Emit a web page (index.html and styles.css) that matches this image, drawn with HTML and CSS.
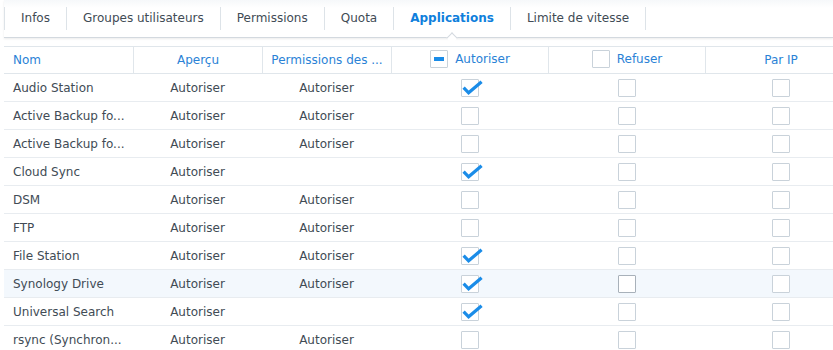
FILE: index.html
```html
<!DOCTYPE html>
<html lang="fr">
<head>
    <meta charset="UTF-8">
    <meta name="viewport" content="width=device-width, initial-scale=1.0">
    <title>Applications</title>
    <link rel="stylesheet" href="styles.css">
</head>
<body>
    <div class="tabs">
        <div class="tab">Infos</div>
        <div class="tab">Groupes utilisateurs</div>
        <div class="tab">Permissions</div>
        <div class="tab">Quota</div>
        <div class="tab active">Applications</div>
        <div class="tab last">Limite de vitesse</div>
    </div>

    <div class="grid-wrap">
        <table class="grid">
            <colgroup>
                <col class="c-small"><col class="c-small"><col class="c-small">
                <col class="c-wide"><col class="c-wide"><col class="c-last">
            </colgroup>
            <thead>
                <tr>
                    <th class="left">Nom</th>
                    <th>Aperçu</th>
                    <th>Permissions des ...</th>
                    <th><span class="head-cb"><span class="cb mixed"></span>Autoriser</span></th>
                    <th><span class="head-cb"><span class="cb"></span>Refuser</span></th>
                    <th>Par IP</th>
                </tr>
            </thead>
            <tbody>
                <tr>
                    <td class="left">Audio Station</td>
                    <td>Autoriser</td><td>Autoriser</td>
                    <td><span class="cb checked"></span></td>
                    <td><span class="cb"></span></td>
                    <td><span class="cb"></span></td>
                </tr>
                <tr>
                    <td class="left">Active Backup fo...</td>
                    <td>Autoriser</td><td>Autoriser</td>
                    <td><span class="cb"></span></td>
                    <td><span class="cb"></span></td>
                    <td><span class="cb"></span></td>
                </tr>
                <tr>
                    <td class="left">Active Backup fo...</td>
                    <td>Autoriser</td><td>Autoriser</td>
                    <td><span class="cb"></span></td>
                    <td><span class="cb"></span></td>
                    <td><span class="cb"></span></td>
                </tr>
                <tr>
                    <td class="left">Cloud Sync</td>
                    <td>Autoriser</td><td></td>
                    <td><span class="cb checked"></span></td>
                    <td><span class="cb"></span></td>
                    <td><span class="cb"></span></td>
                </tr>
                <tr>
                    <td class="left">DSM</td>
                    <td>Autoriser</td><td>Autoriser</td>
                    <td><span class="cb"></span></td>
                    <td><span class="cb"></span></td>
                    <td><span class="cb"></span></td>
                </tr>
                <tr>
                    <td class="left">FTP</td>
                    <td>Autoriser</td><td>Autoriser</td>
                    <td><span class="cb"></span></td>
                    <td><span class="cb"></span></td>
                    <td><span class="cb"></span></td>
                </tr>
                <tr>
                    <td class="left">File Station</td>
                    <td>Autoriser</td><td>Autoriser</td>
                    <td><span class="cb checked"></span></td>
                    <td><span class="cb"></span></td>
                    <td><span class="cb"></span></td>
                </tr>
                <tr class="hover">
                    <td class="left">Synology Drive</td>
                    <td>Autoriser</td><td>Autoriser</td>
                    <td><span class="cb checked"></span></td>
                    <td><span class="cb focus"></span></td>
                    <td><span class="cb"></span></td>
                </tr>
                <tr>
                    <td class="left">Universal Search</td>
                    <td>Autoriser</td><td></td>
                    <td><span class="cb checked"></span></td>
                    <td><span class="cb"></span></td>
                    <td><span class="cb"></span></td>
                </tr>
                <tr>
                    <td class="left">rsync (Synchron...</td>
                    <td>Autoriser</td><td>Autoriser</td>
                    <td><span class="cb"></span></td>
                    <td><span class="cb"></span></td>
                    <td><span class="cb"></span></td>
                </tr>
            </tbody>
        </table>
    </div>

    <script>
        // draw the tick inside every checked box
        document.querySelectorAll('.cb.checked').forEach(function(box) {
            box.innerHTML = '<svg class="tick" width="24" height="20" viewBox="0 0 24 20">' +
                '<path d="M2.6 8.6 L7.6 13.8 L20.6 2.8" fill="none" stroke="#1a8ce8" stroke-width="3.2"/></svg>';
        });
    </script>
</body>
</html>
```

FILE: styles.css
```css
body {
    margin: 0;
    padding: 0;
    font-family: "DejaVu Sans", Verdana, sans-serif;
    font-size: 12px;
    color: #414b55;
    background-color: #fff;
    overflow: hidden;
}
.tabs {
    display: flex;
    height: 37px;
    margin-left: 4px;
    border-bottom: 1px solid #d3d9df;
    box-shadow: 0 1px 2px rgba(0, 0, 0, 0.08);
    background: linear-gradient(#f6f8fa, #fff 8px);
}
.tab {
    position: relative;
    margin-top: 7px;
    height: 23px;
    line-height: 23px;
    padding: 0 16px;
    border-left: 1px solid #dde3e8;
    white-space: nowrap;
}
.tab.last {
    border-right: 1px solid #dde3e8;
}
.tab.active {
    color: #0f7fdc;
    font-weight: bold;
}
.tab.active::after {
    content: "";
    position: absolute;
    left: 50%;
    bottom: -12px;
    width: 7px;
    height: 7px;
    margin-left: -4px;
    background-color: #fff;
    border-top: 1px solid #d3d9df;
    border-left: 1px solid #d3d9df;
    transform: rotate(45deg);
}
.grid-wrap {
    margin: 8px 0 0 4px;
    width: 829px;
    overflow: hidden;
}
.grid {
    width: 852px;
    table-layout: fixed;
    border-collapse: separate;
    border-spacing: 0;
}
.c-small {
    width: 129px;
}
.c-wide {
    width: 157px;
}
.c-last {
    width: 151px;
}
.grid th {
    height: 26px;
    padding: 0 4px;
    font-weight: normal;
    color: #2a82d6;
    text-align: center;
    border-top: 1px solid #e0e6eb;
    border-bottom: 1px solid #e0e6eb;
    border-left: 1px solid #e0e6eb;
    white-space: nowrap;
    overflow: hidden;
}
.grid th.left {
    border-left: none;
    padding-left: 9px;
    text-align: left;
}
.grid td {
    height: 27px;
    padding: 0 4px;
    text-align: center;
    vertical-align: middle;
    border-bottom: 1px solid #e8ecf0;
    white-space: nowrap;
    overflow: hidden;
}
.grid td.left {
    padding-left: 9px;
    text-align: left;
}
.grid tr.hover td {
    background-color: #f3f8fd;
}
.head-cb {
    display: inline-flex;
    align-items: center;
    gap: 7px;
}
.cb {
    position: relative;
    display: inline-block;
    vertical-align: middle;
    width: 16px;
    height: 16px;
    border: 1px solid #c9d2da;
    border-radius: 1px;
    background-color: #fff;
}
.cb.focus {
    border-color: #a8b1ba;
}
.cb.mixed::after {
    content: "";
    position: absolute;
    left: 3px;
    top: 6px;
    width: 10px;
    height: 4px;
    background-color: #1a8ce8;
}
.tick {
    position: absolute;
    left: -1px;
    top: -1px;
}
```
